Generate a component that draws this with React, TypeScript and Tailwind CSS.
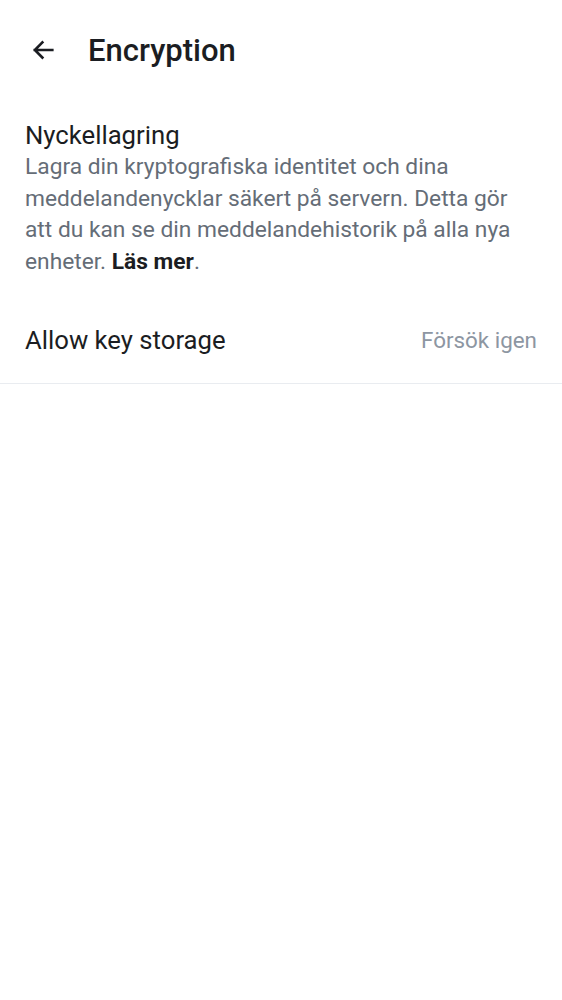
export default function App() {
  return (
    <div className="min-h-[1000px] w-full bg-white font-['Roboto',sans-serif] text-[#1b1d22]">
      <header className="flex h-[100px] items-center pl-[29px]">
        <svg width="28" height="28" viewBox="0 0 24 24" className="text-[#1b1d22]" fill="none">
          <path d="M20 12H5M11.5 5.5 5 12l6.5 6.5" stroke="currentColor" strokeWidth="2.2" strokeLinecap="square" />
        </svg>
        <h1 className="ml-[31px] text-[31px] font-medium leading-none">Encryption</h1>
      </header>

      <section className="px-[25px] pt-[19px]">
        <h2 className="text-[25.7px] leading-[32px]">Nyckellagring</h2>
        <p className="text-[22.75px] leading-[31.5px] text-[#656d77]">
          Lagra din kryptografiska identitet och dina meddelandenycklar säkert på servern. Detta gör att du kan se din
          meddelandehistorik på alla nya enheter. <span className="font-bold text-[#1b1d22]">Läs mer</span>.
        </p>
      </section>

      <div className="flex items-center justify-between border-b border-[#e9ecf0] px-[25px] pt-[47px] pb-[27px]">
        <span className="text-[25.7px] leading-[32px]">Allow key storage</span>
        <span className="text-[22.4px] leading-[32px] text-[#8d96a2]">Försök igen</span>
      </div>
    </div>
  );
}
